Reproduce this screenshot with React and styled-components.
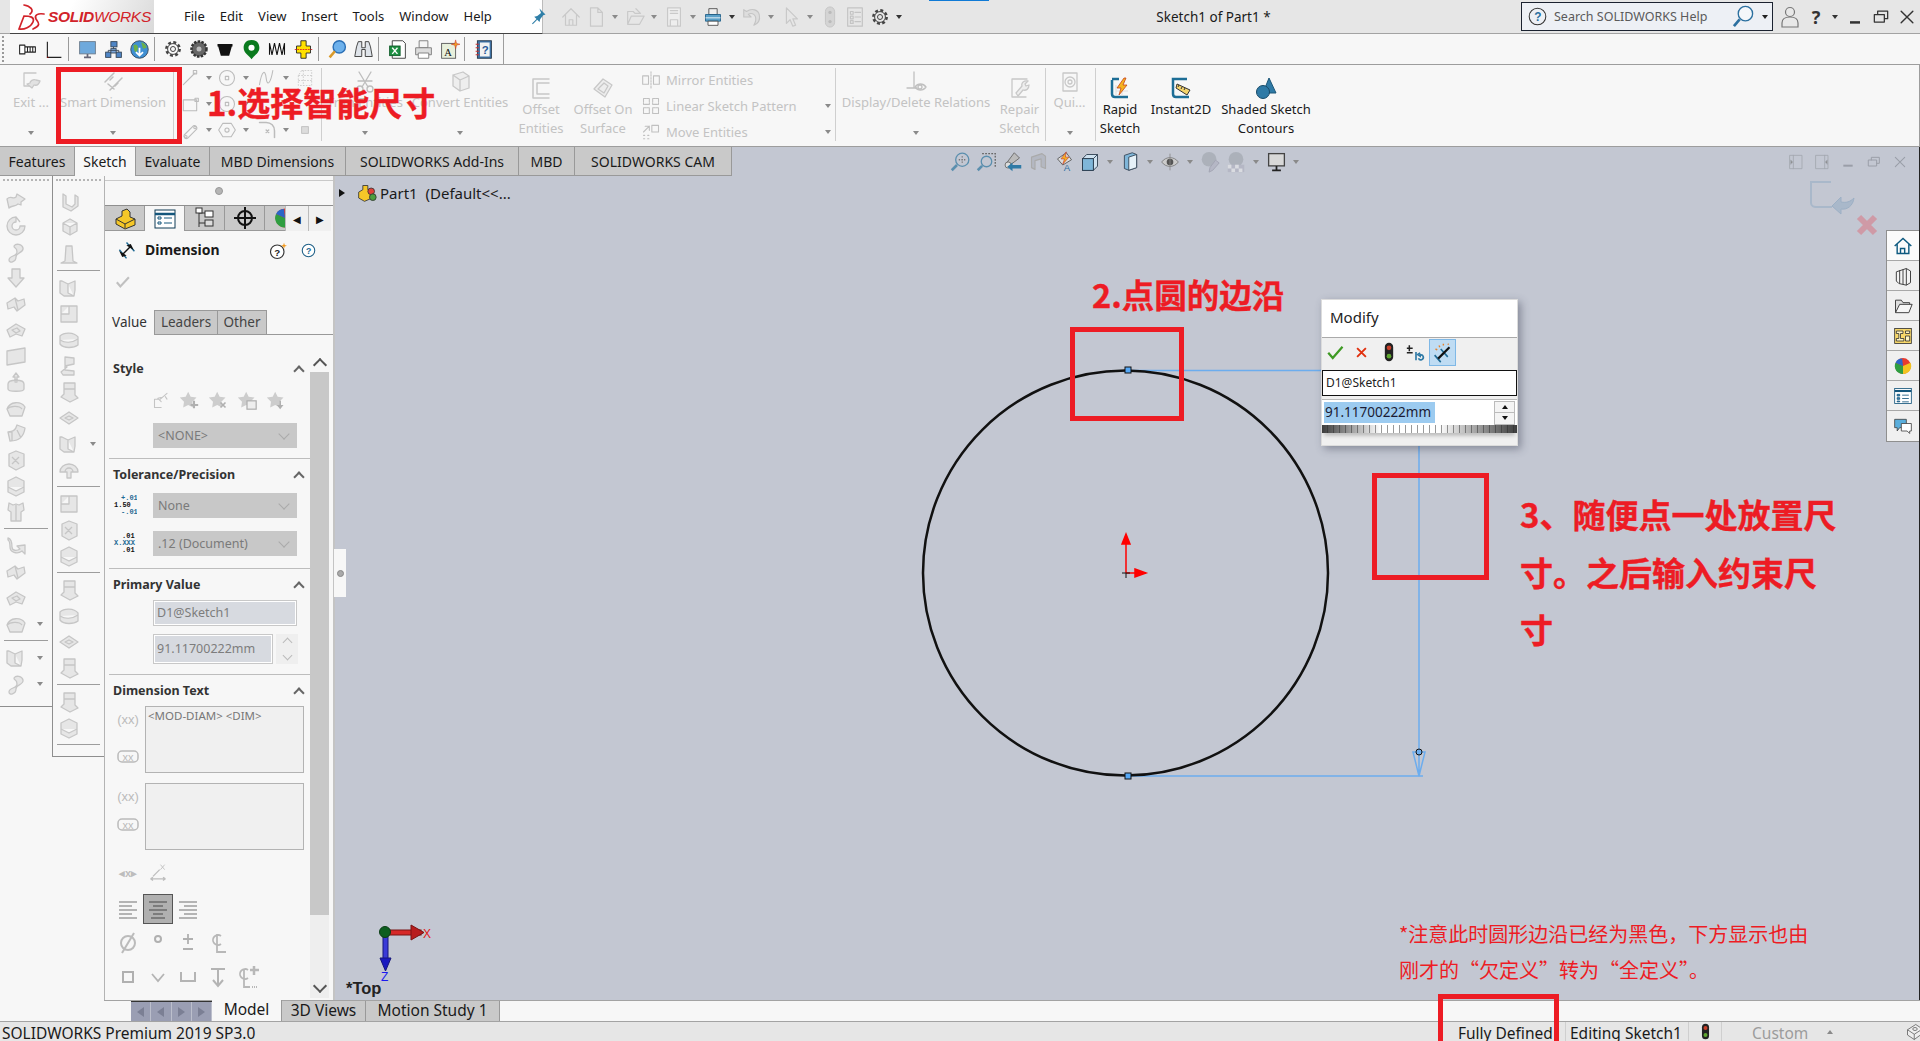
import React from 'react';
import styled, { createGlobalStyle } from 'styled-components';

const UI = `"Noto Sans", "Open Sans", sans-serif`;
const CJK = `"Noto Sans CJK SC", "Noto Sans", sans-serif`;
const RED = '#ed1c24';

const GlobalStyle = createGlobalStyle`
  html, body { margin: 0; padding: 0; width: 1920px; height: 1041px; overflow: hidden; background: #f7f7f7; }
  * { box-sizing: border-box; }
`;

/* ---------- icons ---------- */
const Gh = ({ children, fill = 'none', c = '#bcbcbc', w = 1.3 }) => (
  <g fill={fill} stroke={c} strokeWidth={w} strokeLinejoin="round" strokeLinecap="round">{children}</g>
);
const Solid = ({ d }) => (
  <g fill="#e6e6e6" stroke="#c6c6c6" strokeWidth="1.3" strokeLinejoin="round"><path d={d} /></g>
);

const dockPaths = [
  'M3 11c4-4 6 1 9-2l1-3 8 5-4 3v3l-3-1c-3 3-6 1-9 4z',
  'M12 3a9 9 0 1 0 9 9h-5a4 4 0 1 1-4-4z M12 3l4 5',
  'M5 20c0-5 8-3 8-8s-3-3-3-6c2-3 8-2 9 2 1 5-7 4-7 9s-7 7-7 3z',
  'M8 3h8v9h4l-8 9-8-9h4z',
  'M3 11l8-5 3 3 6-2 1 6-8 6-3-4-6 2z M11 6l3 12',
  'M3 12l9-6 9 5-3 7-6-2-6 3z M8 12l5-2 3 3-4 2z',
  'M3 7l18-3v14l-18 3z',
  'M12 3l3 4h-2v5h-2V7H9z M4 14c0-5 16-5 16 0v5c0 3-16 3-16 0z',
  'M3 13c3-8 14-8 18-2l-3 9H6z M3 13c3-3 12-4 15 0',
  'M4 10c6 0 8-3 9-7l8 3c-1 8-6 13-15 13z M8 10v9 M13 8l4 8',
  'M5 6l7-3 8 3v12l-8 4-7-4z M8 9l7 7 M15 9l-7 7',
  'M4 7l8-4 8 4v6l-8 4-8-4z M4 13v5l8 4 8-4v-5',
  'M5 3l4 2 3-1 3 1 4-2 1 7-3 2v9H7v-9L4 10z M12 5v16',
  'M4 4c4 1 4 6 4 9 0 4 5 4 8 2l-3-3 8-1v9l-3-3c-5 4-12 1-12-4 0-3 0-6-2-7z',
  'M5 5l6 3v9l6 3H7l-4-3V5z M11 8l7-3v9l-1 6',
  'M4 4h16v16H4z M4 12h8V4',
  'M3 8c4-4 14-4 18 1v8c-4 3-14 4-18-1z M3 12c5 3 12 3 18-1',
  'M8 3l9 1v6l-9 2v4l9 1v4H6l-2-3 6-5-2-2z',
  'M7 3h11v12l3 3-8 4-9-5 3-3z M7 9h11',
  'M3 12l9-6 9 6-9 6z M8 12l4-2 4 2-4 2z',
  'M12 3C7 5 6 9 6 13l6 5 6-5 0-9z M6 13l6-4 6 4',
  'M3 14a9 8 0 0 1 18 0H14v6h-4v-6z M8 14a4 4 0 0 1 8 0',
  'M6 4l3 2v8l6 3 3-3V5l3 2v9l-7 5-8-4z',
  'M6 7l7-4 7 4v8l-7 4-7-4z M6 7l7 4 7-4M13 11v8',
  'M9 4h6l1 15 4 2H4l4-2z',
];

const shapes = {
  home: <Gh c="#c9c9c9"><path d="M3 12l9-9 9 9M6 10v11h12V10M10 21v-6h4v6" /></Gh>,
  page: <Gh c="#c9c9c9"><path d="M6 2h8l5 5v15H6z M14 2v5h5" /></Gh>,
  open: <Gh c="#c9c9c9"><path d="M4 20V6h6l2 2h5M4 20l4-9h14l-5 9z M13 3l5 5" /></Gh>,
  save: <Gh c="#c9c9c9" fill="#eee"><path d="M5 2h14v20H5z M8 5h8M8 8h8M8 15h8v7H8z" /></Gh>,
  print: <g><path d="M7 2h10v7H7z" fill="#eee" stroke="#444" /><path d="M3 9h18v8H3z" fill="#5aa0c8" stroke="#1c5c86" /><path d="M3 13h18" stroke="#fff" /><path d="M6 17h12v5H6z" fill="#fff" stroke="#444" /></g>,
  undo: <Gh c="#c4c4c4" fill="#ddd" w={1.2}><path d="M3 4v8h8L8 9c4-2 9 0 8 7-.3 2-1 3-2 5 5-2 7-6 6-11-1-6-8-8-14-4z" /></Gh>,
  cursor: <Gh c="#c9c9c9"><path d="M7 2v17l4-4 3 7 3-1-3-7h5z" /></Gh>,
  rebuild: <g><rect x="7" y="1" width="10" height="22" rx="5" fill="#d4d4d4" stroke="#c4c4c4" /><circle cx="12" cy="7" r="1.8" fill="#bbb" /><circle cx="12" cy="17" r="1.8" fill="#bbb" /></g>,
  props: <Gh c="#c4c4c4"><path d="M4 2h16v20H4z M7 6h3v3H7z M12 7h6 M7 11h3v3H7z M12 12h6 M7 16h3v3H7z M12 17h6" /></Gh>,
  gear: <g fill="none" stroke="#444" strokeWidth="1.2"><circle cx="12" cy="12" r="8" strokeDasharray="3.5 2.8" strokeWidth="3" /><circle cx="12" cy="12" r="6.500" /><circle cx="12" cy="12" r="3" /></g>,
  gearDark: <g><circle cx="12" cy="12" r="9" fill="#666" stroke="#333" strokeDasharray="3 1.500" strokeWidth="3" /><circle cx="12" cy="12" r="3" fill="#bbb" /></g>,
  bolt: <Gh c="#222" fill="#fff" w={1.2}><path d="M3 7h6v10H3z M9 9h12v6H9z M12 9v6 M15 9v6 M18 9v6" /></Gh>,
  axis: <g fill="none" stroke="#222" strokeWidth="1.3"><path d="M5 3v18h16" /><path d="M5 21h1" stroke="#c00" /></g>,
  monitor: <g><rect x="3" y="3" width="18" height="14" fill="#6ea9dc" stroke="#6a7a8a" /><path d="M8 21h8M12 17v4" stroke="#667" strokeWidth="2" /></g>,
  network: <g stroke="#345" fill="#4f86c6"><rect x="9" y="3" width="7" height="6" /><rect x="3" y="15" width="6" height="6" /><rect x="15" y="15" width="6" height="6" /><rect x="9" y="11" width="6" height="5" fill="#7da7d9" /><path d="M12 9v2M6 15v-2h12v2" fill="none" /></g>,
  globe: <g><circle cx="12" cy="12" r="10" fill="#3f8fd2" stroke="#345" /><path d="M5 7c4-2 6 1 5 5s-3 3-4 1z M14 4c3 0 6 3 6 6l-4 1z" fill="#6bb04a" /><path d="M12 10v9M8 15l4 4 4-4" stroke="#fff" strokeWidth="2" fill="none" /></g>,
  belt: <path d="M3 6h18l-4 14H7z M3 6h18v3H3z" fill="#111" />,
  pin: <g><path d="M12 1c-6 0-9 4-9 9 0 6 6 9 9 13 3-4 9-7 9-13 0-5-3-9-9-9z" fill="#0a7a1e" /><circle cx="12" cy="10" r="3.500" fill="#fff" /></g>,
  spring: <g stroke="#111" strokeWidth="1.3" fill="none"><path d="M3 5v14M3 5l3 14 3-14 3 14 3-14 3 14 3-14v14" /></g>,
  cross: <g><path d="M9 2h6v6h5v8h-5v6H9v-6H4V8h5z" fill="#ffe100" stroke="#222" /><path d="M2 12h20" stroke="#d22" strokeDasharray="2 1" /></g>,
  lens: <g><circle cx="14" cy="9" r="7" fill="#6db1ec" stroke="#2a6fb5" strokeWidth="1.600" /><path d="M9 14l-6 7" stroke="#d99a2b" strokeWidth="3" /></g>,
  binoc: <g fill="#dfe4ea" stroke="#333"><path d="M4 9l2-6h4v7h4V3h4l2 6 2 11h-8v-8h-4v8H2z" /></g>,
  excel: <g><path d="M6 2h12l3 3v17H6z" fill="#fff" stroke="#333" /><rect x="3" y="8" width="12" height="11" fill="#1d8f42" stroke="#0e5a28" /><path d="M6 10l6 7M12 10l-6 7" stroke="#fff" strokeWidth="1.500" /></g>,
  printer: <g fill="#ddd" stroke="#777"><path d="M7 2h10v8H7z" fill="#f4f4f4" /><path d="M3 10h18v8H3z" /><path d="M6 16h12v6H6z" fill="#fff" /></g>,
  docStar: <g><rect x="3" y="5" width="16" height="17" fill="#e8f0dc" stroke="#555" /><text x="6" y="19" fontSize="12" fontFamily="Liberation Serif, serif" fill="#111">A</text><path d="M19 1l1 4 4 1-4 1-1 4-1-4-4-1 4-1z" fill="#f0a020" stroke="#c33" strokeWidth=".6" /></g>,
  helpBook: <g><rect x="5" y="2" width="16" height="20" fill="#3f74a8" stroke="#234" /><rect x="8" y="4" width="11" height="16" fill="#f2f2f2" /><text x="10" y="17" fontSize="13" fontWeight="700" fontFamily="Liberation Sans, sans-serif" fill="#2b5b99">?</text><path d="M3 6h4M3 10h4M3 14h4M3 18h4" stroke="#c33" strokeWidth="1.300" /></g>,
  pinTack: <g fill="#2f7fa8"><path d="M14 2l8 8-3 1-4 5-1 4-3-3-6 6-1-1 6-6-3-3 4-1 5-4z" /></g>,
  exit: <Gh c="#c8c8c8"><path d="M17 4H5v13h6" /><path d="M13 19l-5-4 3-1c0-2 3-4 6-3l4 1c-1 3-3 5-6 4z" fill="#e2e2e2" /></Gh>,
  smart: <Gh c="#bfbfbf" w={1.500}><path d="M4 13l9-9M9 21L21 9M7 15l6 5M9 11l3-3M14 17l3-3" /></Gh>,
  line: <Gh><path d="M4 20L18 6" /><rect x="16" y="3" width="4" height="4" /></Gh>,
  circleS: <Gh><circle cx="12" cy="12" r="9" /><rect x="10" y="10" width="4" height="4" /></Gh>,
  spline: <Gh><path d="M3 20C6 2 10 2 11 12s5 8 8-9" /></Gh>,
  dashBox: <g fill="none" stroke="#c8c8c8" strokeDasharray="2 1.500"><path d="M8 3h12v18H4V9z M4 9h16M4 15h16M10 3v18" /></g>,
  rectS: <Gh><path d="M4 7h16v13H4z" /><rect x="18" y="5" width="4" height="4" /></Gh>,
  slotS: <Gh><path d="M5 18l11-11a3 3 0 0 1 4 4L9 22a3 3 0 0 1-4-4z" /><circle cx="18" cy="9" r="1.500" /><circle cx="7" cy="20" r="1.500" /></Gh>,
  polyS: <Gh><path d="M7 4h10l5 8-5 8H7l-5-8z" /><circle cx="12" cy="12" r="2.500" /></Gh>,
  fillet: <Gh w={1.800}><path d="M3 3h8c6 0 10 4 10 10v8" /><path d="M11 12l3 3M14 12l-3 3" /></Gh>,
  pointS: <rect x="8" y="8" width="8" height="8" fill="#dcdcdc" stroke="#bbb" />,
  trim: <Gh c="#bdbdbd"><circle cx="7" cy="20" r="3" /><circle cx="17" cy="20" r="3" /><path d="M9 18L18 3M15 18L6 3M5 12h14" /></Gh>,
  convert: <Gh c="#c8c8c8" fill="#eee"><path d="M5 6l10-3 6 4v12l-9 3-7-5z M5 6l7 5v11M12 11l9-4" /></Gh>,
  offset: <Gh c="#c8c8c8" w={1.500}><path d="M20 3H4v19h16M20 7H8v11h12" /></Gh>,
  offsetS: <Gh c="#c8c8c8" fill="#ededed"><path d="M3 13l9-10 9 6-7 12z M7 13l6-6 4 3-4 7z" /></Gh>,
  mirror: <Gh c="#c0c0c0"><path d="M12 2v20" strokeDasharray="2 1.500" /><path d="M2 7h7v10H2zM15 7h7v10h-7z" /></Gh>,
  pattern: <Gh c="#c0c0c0"><path d="M3 3h7v7H3zM14 3h7v7h-7zM3 14h7v7H3zM14 14h7v7h-7z" strokeDasharray="3 1" /></Gh>,
  move: <Gh c="#c0c0c0"><path d="M3 12L10 5M5 5h5v5M13 4h8v8h-8z" /><path d="M3 16h3M8 16h3M3 20h3M8 20h3" strokeDasharray="1.500 1.500" /></Gh>,
  relations: <Gh c="#c0c0c0"><path d="M10 3v16M3 19h10" /><path d="M11 18c3-4 8-4 11 0-3 4-8 4-11 0z" /><circle cx="16" cy="18" r="2" /></Gh>,
  repair: <Gh c="#c8c8c8"><path d="M19 3H4v18h14" /><path d="M8 17l6-7c-1-3 2-6 6-5l-3 3 1 2 3-1c0 4-3 6-6 5l-5 6z" fill="#eee" /></Gh>,
  quick: <Gh c="#c8c8c8"><path d="M5 4h14M5 4v18h14V4" /><circle cx="12" cy="13" r="5" /><circle cx="12" cy="13" r="2" /></Gh>,
  rapid: <g><path d="M20 21H7c-2 0-3-1-3-3V4" fill="none" stroke="#1d6e96" strokeWidth="2.500" /><path d="M4 3h7" stroke="#1d6e96" strokeWidth="2.500" /><path d="M8 15h12M8 9v11M14 9v11" stroke="#ddd" /><path d="M16 2L9 12h4l-2 7 8-10h-4l3-7z" fill="#f6b421" stroke="#c7411b" strokeWidth=".8" /></g>,
  instant: <g><path d="M20 21H7c-2 0-3-1-3-3V3h14" fill="none" stroke="#1d6e96" strokeWidth="2.500" /><path d="M8 8l13 6-3 5L7 12z" fill="#f4d36a" stroke="#333" /><path d="M10 9l-1 2M13 11l-1 2M16 12l-1 2" stroke="#333" /></g>,
  shaded: <g><path d="M15 2l7 15H9z" fill="#2f7aa6" stroke="#1c5677" /><circle cx="9" cy="16" r="6.500" fill="#2f7aa6" stroke="#174a68" /></g>,
  zoomFit: <g fill="none" stroke="#5b8fae" strokeWidth="1.500"><circle cx="14" cy="10" r="7.500" /><path d="M8 16l-6 6" strokeWidth="3" /><path d="M14 6v8M10 10h8" stroke="#777" strokeDasharray="1.500 1.500" /></g>,
  zoomArea: <g fill="none" stroke="#5b8fae" strokeWidth="1.500"><circle cx="12" cy="12" r="6" /><path d="M7 17l-5 5" strokeWidth="3" /><path d="M7 3h15v15" stroke="#666" strokeDasharray="2 1.500" /></g>,
  prevView: <g><path d="M5 14l9-12 6 6-12 9z" fill="#bbb" stroke="#666" /><circle cx="7" cy="16" r="3.500" fill="#ddd" stroke="#666" /><path d="M22 16H12v-3l-6 5 6 5v-3h10z" fill="#2f7aa6" /></g>,
  sectionV: <Gh c="#aaa" fill="#b4b8c2"><path d="M4 7l12-4 4 3v14l-5-2V9L8 11v10l-4-2z" /></Gh>,
  rapidA: <g><path d="M4 9l10-7 6 8-10 6z" fill="#ddd" stroke="#555" /><path d="M14 1l-6 8h4l-2 6 7-8h-4z" fill="#f6b421" stroke="#b33" strokeWidth=".7" /><text x="11" y="23" fontSize="11" fontFamily="Liberation Sans, sans-serif" fill="#2f6f9f">A</text></g>,
  cube: <g fill="#cfe2f0" stroke="#234"><path d="M3 8l5-5h13v14l-5 5H3z" /><path d="M3 8h13v14M16 8l5-5" fill="none" /><rect x="3" y="8" width="13" height="14" fill="#7fb6d9" /></g>,
  display: <g><path d="M5 5l9-3 5 2v15l-9 3-5-2z" fill="#7fb6d9" stroke="#345" /><path d="M10 7l9-3v15l-9 3z" fill="#e6f1f8" stroke="#345" /></g>,
  eye: <g><path d="M2 12c5-7 15-7 20 0-5 7-15 7-20 0z" fill="#ccc" stroke="#777" /><circle cx="12" cy="12" r="4" fill="#555" /><path d="M12 2v20" stroke="#888" /></g>,
  appear: <g opacity=".55"><circle cx="11" cy="9" r="8" fill="#9aa0a8" /><path d="M12 18l6-8 4 3-7 8-4 2z" fill="#aab" stroke="#889" /></g>,
  scene: <g opacity=".55"><circle cx="12" cy="9" r="8" fill="#9aa0a8" /><path d="M3 15h18v8H3z" fill="#aab" /><path d="M3 15h4v4H3zM11 15h4v4h-4zM7 19h4v4H7zM15 19h4v4h-4z" fill="#eee" /></g>,
  screen: <g><rect x="3" y="3" width="18" height="14" fill="#d8d8d8" stroke="#444" strokeWidth="1.500" /><path d="M12 17v4M7 22h10" stroke="#222" strokeWidth="2" /></g>,
  paneL: <Gh c="#a4a8b0"><path d="M3 2h18v20H3z M8 2v20" /><path d="M7 12l-3-3v6z" fill="#888" /></Gh>,
  paneR: <Gh c="#a4a8b0"><path d="M3 2h18v20H3z M16 2v20" /><path d="M17 12l3-3v6z" fill="#888" /></Gh>,
  winMinDoc: <path d="M5 16h14v3H5z" fill="#9a9ea8" />,
  winMaxDoc: <Gh c="#9a9ea8" w={1.500}><path d="M4 9h12v9H4z M8 9V5h12v9h-4" /></Gh>,
  winCloseDoc: <Gh c="#9a9ea8" w={1.600}><path d="M5 5l14 14M19 5L5 19" /></Gh>,
  winMin: <path d="M3 17h12v3H3z" fill="#333" transform="translate(3 0)" />,
  winMax: <Gh c="#333" w={1.500}><path d="M4 9h12v9H4z M8 9V5h12v9h-4" /></Gh>,
  winClose: <Gh c="#333" w={1.700}><path d="M5 5l14 14M19 5L5 19" /></Gh>,
  taskHome: <g fill="none" stroke="#0e5a80" strokeWidth="1.700"><path d="M2 12l10-9 10 9M5 10v11h14V10M9 21v-6h5v6" /></g>,
  taskBooks: <g fill="#f4f4f4" stroke="#444" strokeWidth="1.200"><path d="M4 7l12-4 5 3v14l-5 3-9-2-3-3z M8 5v16M12 4v18M16 3v20" /></g>,
  taskFolder: <g stroke="#444" strokeWidth="1.200"><path d="M3 20V5h7l2 3h8v3" fill="#ddd" /><path d="M3 20l5-10h15l-4 10z" fill="#f6f6f6" /></g>,
  taskLayout: <g stroke="#333"><rect x="2" y="3" width="20" height="18" fill="#f8d86a" /><path d="M4 6h8v3h-3v6h4v3H4v-3h3V9H4z M15 6h5v3h-5z M15 12h5v6h-5z" fill="#fff4c0" /></g>,
  taskBall: <g><circle cx="12" cy="12" r="9.500" fill="#e63b2e" /><path d="M12 12L3 8a9.500 9.500 0 0 0 9 13.500z" fill="#2f9e41" /><path d="M12 12v9.500A9.500 9.500 0 0 0 21 8z" fill="#f2c320" /><path d="M12 12L3 8a9 9 0 0 1 8-5z" fill="#2a66c8" /></g>,
  taskList: <g stroke="#14567c" fill="#fff"><rect x="2" y="3" width="20" height="18" /><path d="M2 6h20" strokeWidth="2.500" /><path d="M5 10h3v2H5zM5 14h3v2H5zM5 18h3v1H5zM11 11h8M11 15h8M11 19h8" fill="#3a8cc0" /></g>,
  taskChat: <g stroke="#444"><path d="M2 4h14v10H8l-3 4v-4H2z" fill="#5aaedc" /><path d="M10 9h12v9h-2v3l-3-3h-7z" fill="#fff" /></g>,
  partYellow: <g stroke="#333"><path d="M3 13l6-3V5l5-2 3 3v5l5 2v6l-10 4-9-5z" fill="#f5c728" /><path d="M3 13l9 5 10-5M12 18v4" fill="none" /></g>,
  list: <g stroke="#0e3a55" fill="#fff"><rect x="2" y="3" width="20" height="18" /><path d="M2 7h20" strokeWidth="2.500" stroke="#14567c" /><path d="M5 10h3v2H5zM5 15h3v2H5zM11 11h8M11 16h8" stroke="#14567c" /></g>,
  tree: <g stroke="#333" fill="#fff"><path d="M6 3v18M6 7h6M6 17h6" /><rect x="3" y="2" width="6" height="5" /><rect x="12" y="5" width="8" height="6" /><rect x="12" y="14" width="8" height="6" fill="#ddd" /></g>,
  target: <g fill="none" stroke="#111" strokeWidth="2"><circle cx="12" cy="12" r="7" /><path d="M12 1v22M1 12h22" /></g>,
  dimTitle: <g fill="none" stroke="#1e6a94" strokeWidth="1.800"><path d="M3 11l9 11M12 2l10 11" /><path d="M7 17L17 7" stroke="#111" strokeWidth="1.800" /><path d="M5 15l5 3-3 1zM19 9l-5-3 3-1z" fill="#111" stroke="#111" /></g>,
  whatsNew: <g><circle cx="11" cy="13" r="9" fill="#fff" stroke="#333" strokeWidth="1.500" /><text x="7" y="18" fontSize="13" fontWeight="700" fontFamily="Liberation Sans, sans-serif" fill="#222">?</text><path d="M20 1l1 3 3 1-3 1-1 3-1-3-3-1 3-1z" fill="#f39a1e" /></g>,
  helpC: <g><circle cx="12" cy="12" r="10" fill="#fff" stroke="#1e5f86" strokeWidth="1.700" /><text x="8" y="17" fontSize="14" fontWeight="700" fontFamily="Liberation Sans, sans-serif" fill="#1e6a94">?</text></g>,
  helpGrey: <g><circle cx="12" cy="12" r="10.500" fill="none" stroke="#333" strokeWidth="1.300" /><text x="8" y="17.500" fontSize="15" fontWeight="700" fontFamily="Liberation Sans, sans-serif" fill="#2a6f9f">?</text></g>,
  check: <path d="M4 13l5 6L21 6" fill="none" stroke="#c0c0c0" strokeWidth="3" />,
  styleA: <Gh c="#c4c4c4"><path d="M3 11V21h8M3 11h5l3 3M10 11l8-7M7 10l4-1M16 8l2 3" /></Gh>,
  starPlus: <g><path d="M11 2l3 6 7 1-5 5 1 7-6-3-6 3 1-7-5-5 7-1z" fill="#cdcdcd" /><path d="M18 13v9M14 18h9" stroke="#b0b0b0" strokeWidth="2.500" /></g>,
  starX: <g><path d="M11 2l3 6 7 1-5 5 1 7-6-3-6 3 1-7-5-5 7-1z" fill="#cdcdcd" /><path d="M15 15l6 6M21 15l-6 6" stroke="#b0b0b0" strokeWidth="2" /></g>,
  starSave: <g><path d="M11 2l3 6 7 1-5 5 1 7-6-3-6 3 1-7-5-5 7-1z" fill="#cdcdcd" /><rect x="12" y="13" width="11" height="10" fill="#eee" stroke="#b0b0b0" strokeWidth="1.500" /></g>,
  starDown: <g><path d="M11 2l3 6 7 1-5 5 1 7-6-3-6 3 1-7-5-5 7-1z" fill="#cdcdcd" /><path d="M18 13v5h3l-4 5-4-5h3v-5z" fill="#b0b0b0" /></g>,
  tol: <g fontFamily="Liberation Mono, monospace" fontSize="7" fontWeight="700"><text x="8" y="6" fill="#1e6a94">+.01</text><text x="1" y="13" fill="#111">1.50</text><text x="8" y="20" fill="#1e6a94">-.01</text></g>,
  prec: <g fontFamily="Liberation Mono, monospace" fontSize="7" fontWeight="700"><text x="9" y="6" fill="#111">.01</text><text x="1" y="13" fill="#1e6a94">X.XXX</text><text x="9" y="20" fill="#111">.01</text></g>,
  xxParen: <text x="12" y="16" textAnchor="middle" fontSize="13" fontFamily="Liberation Sans, sans-serif" fill="#bbb">(xx)</text>,
  xxBox: <g><rect x="2" y="6" width="20" height="11" rx="4" fill="none" stroke="#bbb" strokeWidth="1.500" /><text x="12" y="15.500" textAnchor="middle" fontSize="11" fontFamily="Liberation Sans, sans-serif" fill="#bbb">xx</text></g>,
  arrowX: <text x="12" y="16" textAnchor="middle" fontSize="11" fontFamily="Liberation Sans, sans-serif" fontWeight="700" fill="#bdbdbd">◂x▸</text>,
  arrowAngle: <g stroke="#bdbdbd" fill="none" strokeWidth="1.500"><path d="M3 19h18M3 19l3-2M3 19l3 2M21 19l-3-2M21 19l-3 2M6 16l8-8" /><path d="M15 2l5 6M20 2l-5 6" strokeWidth="1" /></g>,
  alignL: <path d="M3 5h18M3 9h13M3 13h18M3 17h13M3 21h18" stroke="#b4b4b4" strokeWidth="1.800" />,
  alignC: <path d="M3 5h18M7 9h10M3 13h18M7 17h10M5 21h14" stroke="#7c7c7c" strokeWidth="1.800" />,
  alignR: <path d="M3 5h18M8 9h13M3 13h18M8 17h13M3 21h18" stroke="#b4b4b4" strokeWidth="1.800" />,
  diam: <g fill="none" stroke="#bbb" strokeWidth="2"><circle cx="12" cy="13" r="7" /><path d="M6 23L18 3" /></g>,
  deg: <circle cx="12" cy="9" r="3" fill="none" stroke="#b0b0b0" strokeWidth="2" />,
  plusMinus: <path d="M12 4v10M7 9h10M7 19h10" stroke="#b0b0b0" strokeWidth="1.800" fill="none" />,
  cl: <g fill="none" stroke="#b8b8b8" strokeWidth="1.800"><path d="M15 6a5 5 0 1 0 0 8M11 4v18h9" /></g>,
  sq: <rect x="7" y="7" width="10" height="10" fill="none" stroke="#b0b0b0" strokeWidth="2" />,
  vee: <path d="M6 9l6 7 6-7" fill="none" stroke="#b4b4b4" strokeWidth="1.800" />,
  cbore: <path d="M5 7v9h14V7" fill="none" stroke="#b4b4b4" strokeWidth="2" />,
  depth: <path d="M5 4h14M12 4v17M7 15l5 6 5-6" fill="none" stroke="#b4b4b4" strokeWidth="2" />,
  clPlus: <g fill="none" stroke="#b8b8b8" strokeWidth="1.800"><path d="M12 5a5 5 0 1 0 0 8M8 4v18h6" /><path d="M18 1v9M14 5h9" strokeWidth="2.500" /><path d="M16 22h6" strokeDasharray="1 1" /></g>,
  check2: <path d="M3 13l6 7L22 5" fill="none" stroke="#3f9a24" strokeWidth="3" />,
  cross2: <path d="M5 5l14 14M19 5L5 19" stroke="#e1300e" strokeWidth="3" />,
  traffic: <g><rect x="7" y="1" width="10" height="22" rx="5" fill="#222" /><circle cx="12" cy="7" r="2.800" fill="#c8402a" /><circle cx="12" cy="17" r="2.800" fill="#5ea72f" /></g>,
  linkUndo: <g><path d="M4 4v7M1 7.500h7M1 13h7" stroke="#222" strokeWidth="1.800" /><path d="M12 12v10" stroke="#2f7aa6" strokeWidth="2" /><path d="M17 13l-3 2 3 2v-1.500a3 3 0 1 1-2 4" fill="none" stroke="#2f7aa6" strokeWidth="2" /></g>,
  wand: <g><path d="M3 15l7 8M10 8l8 9" stroke="#1e6a94" strokeWidth="1.800" fill="none" /><path d="M7 19L20 6" stroke="#111" strokeWidth="2.500" /><path d="M8 4l1 2M13 2v2M18 2l1 1M4 8l2 1" stroke="#e8812a" strokeWidth="1.600" /></g>,
  user: <g fill="#e8e8e8" stroke="#777" strokeWidth="1.200"><circle cx="12" cy="7" r="4.500" /><path d="M4 22v-4c0-4 3-6 8-6s8 2 8 6v4z" /></g>,
  searchLens: <g fill="none" stroke="#2a6f9f" strokeWidth="1.400"><circle cx="14" cy="9" r="7.500" fill="#f4f7fa" /><path d="M8 15l-6 7" strokeWidth="2.800" /></g>,
  partTree: <g stroke="#333"><path d="M2 11l5-3V3h6v5l3 2v9l-7 3-7-4z" fill="#f5c728" /><circle cx="17" cy="10" r="4" fill="#e0413a" /><circle cx="19" cy="17" r="4" fill="#4a9e3f" /></g>,
  diskMini: <g fill="#eee" stroke="#555"><path d="M2 9l11-7 9 6v6l-11 8-9-6z" /><path d="M2 9l9 6 11-7M11 15v7" fill="none" /><ellipse cx="12" cy="8" rx="3" ry="2" fill="none" /></g>,
};

const Ico = ({ n, s = 24 }) => (
  <svg width={s} height={s} viewBox="0 0 24 24" style={{ display: 'block', flex: 'none' }}>{shapes[n]}</svg>
);
const Ghost = ({ i, s = 24 }) => (
  <svg width={s} height={s} viewBox="0 0 24 24" style={{ display: 'block', flex: 'none' }}><Solid d={dockPaths[i % dockPaths.length]} /></svg>
);

/* ---------- shell ---------- */
const Window = styled.div`
  position: relative;
  width: 1920px;
  height: 1041px;
  overflow: hidden;
  display: flex;
  flex-direction: column;
  background: #f7f7f7;
  font-family: ${UI};
  color: #1a1a1a;
`;

const TitleBar = styled.div`
  position: relative;
  height: 34px;
  display: flex;
  flex: none;
  padding-left: 10px;
  background: #e6e6e6;
  border-bottom: 1px solid #a3a3a3;
`;
const TopAccent = styled.div`
  position: absolute;
  left: 929px;
  top: 0;
  width: 60px;
  height: 1px;
  background: #0f7ad6;
`;
const LogoBox = styled.div`
  width: 144px;
  height: 34px;
  flex: none;
  display: flex;
  align-items: center;
  padding-left: 5px;
  background: linear-gradient(115deg, #ffffff 40%, #d9d9d9);
  border-bottom: 1px solid #444;
`;
const LogoText = styled.span`
  font: italic 700 15.500px "Liberation Sans", sans-serif;
  color: #d2232a;
  letter-spacing: -0.3px;
  margin-left: 3px;
  white-space: nowrap;
  span { font-weight: 400; }
`;
const MenuBox = styled.div`
  width: 389px;
  height: 34px;
  flex: none;
  display: flex;
  align-items: center;
  gap: 15px;
  padding: 0 0 1px 30px;
  background: #fff;
  border-bottom: 1px solid #444;
  border-right: 1px solid #bbb;
  font-size: 13px;
`;
const PinSlot = styled.div`
  margin-left: 22px;
`;
const QuickBar = styled.div`
  display: flex;
  flex: none;
  align-items: center;
  padding-left: 15px;
  width: 364px;
`;
const Slot = styled.div`
  width: ${(p) => p.$w || 25}px;
  height: ${(p) => p.$h || 24}px;
  flex: none;
  display: flex;
  align-items: center;
  justify-content: center;
`;
const Caret = styled.i`
  display: block;
  flex: none;
  width: 0;
  height: 0;
  border-left: 3.500px solid transparent;
  border-right: 3.500px solid transparent;
  border-top: 4px solid ${(p) => p.$c || '#8a8a8a'};
  ${(p) => p.$up && `border-top: 0; border-bottom: 4px solid ${p.$c || '#8a8a8a'};`}
`;
const DocTitle = styled.div`
  width: 612px;
  flex: none;
  text-align: center;
  font-size: 13.500px;
  line-height: 34px;
  padding-left: 1px;
`;
const SearchBox = styled.div`
  margin: 2px 0 0 2px;
  width: 252px;
  height: 29px;
  flex: none;
  display: flex;
  align-items: center;
  padding: 0 0 0 6px;
  background: #edf0f5;
  border: 1.500px solid #1b2230;
  font-size: 12.500px;
  color: #5a5a5a;
`;
const SearchText = styled.span`
  margin-left: 7px;
  width: 172px;
  flex: none;
  white-space: nowrap;
`;
const WinButtons = styled.div`
  display: flex;
  align-items: center;
  margin-left: 4px;
`;

const ToolRow = styled.div`
  height: 31px;
  flex: none;
  background: #f7f7f7;
  border-bottom: 1px solid #9d9d9d;
`;
const ToolInner = styled.div`
  width: 504px;
  height: 100%;
  display: flex;
  align-items: center;
  border-right: 1px solid #9d9d9d;
`;
const Grip = styled.div`
  width: 2px;
  height: 26px;
  margin: 0 10px 0 2px;
  border-left: 2px dotted #999;
`;
const ToolSep = styled.div`
  width: 1px;
  height: 24px;
  background: #9a9a9a;
  margin: 0 5px 0 2px;
`;

/* ---------- ribbon ---------- */
const Ribbon = styled.div`
  height: 82px;
  flex: none;
  display: flex;
  background: #f7f7f7;
  border-bottom: 1px solid #9d9d9d;
  border-right: 1px solid #9d9d9d;
`;
const RibbonButton = styled.div`
  width: ${(p) => p.$w}px;
  height: 81px;
  flex: none;
  display: flex;
  flex-direction: column;
  align-items: center;
  padding-top: ${(p) => (p.$two ? 11 : 4)}px;
`;
const RibbonLabel = styled.div`
  font-size: 13px;
  line-height: 19px;
  text-align: center;
  white-space: nowrap;
  color: ${(p) => (p.$on ? '#1a1a1a' : '#c3c3c3')};
`;
const RibbonCaret = styled.div`
  margin-top: auto;
  margin-bottom: 11px;
`;
const RibbonGap = styled.div`
  width: ${(p) => p.$w}px;
  flex: none;
`;
const RibbonSep = styled.div`
  width: 1px;
  height: 73px;
  margin-top: 3px;
  flex: none;
  background: #cfcfcf;
`;
const SketchGrid = styled.div`
  width: 147px;
  flex: none;
  padding-left: 6px;
  display: grid;
  grid-template-columns: 37px 40px 38px 26px;
  grid-auto-rows: 26px;
`;
const SketchCell = styled.div`
  display: flex;
  align-items: center;
  gap: ${(p) => p.$gap || 6}px;
`;
const StackColumn = styled.div`
  width: 199px;
  flex: none;
  display: flex;
  flex-direction: column;
  padding: 2px 4px 0 5px;
`;
const StackRow = styled.div`
  height: 26px;
  display: flex;
  align-items: center;
  gap: 5px;
  font-size: 13px;
  color: #c3c3c3;
  white-space: nowrap;
  ${Caret} { margin-left: auto; }
`;

/* ---------- tabs ---------- */
const TabRow = styled.div`
  height: 29px;
  flex: none;
  display: flex;
  align-items: stretch;
  background: #c3c7d2;
  border-right: 1px solid #222;
`;
const Tab = styled.div`
  width: ${(p) => p.$w}px;
  flex: none;
  display: flex;
  align-items: center;
  justify-content: center;
  font-size: 14px;
  white-space: nowrap;
  background: ${(p) => (p.$on ? '#f7f7f7' : '#c9c9c9')};
  border-right: 1px solid #999;
  border-bottom: ${(p) => (p.$on ? 'none' : '1px solid #999')};
`;
const HeadsUp = styled.div`
  margin-left: 215px;
  display: flex;
  align-items: center;
`;
const DocControls = styled.div`
  margin-left: 480px;
  display: flex;
  align-items: center;
`;

/* ---------- left side ---------- */
const Work = styled.div`
  flex: 1;
  min-height: 0;
  display: flex;
`;
const Dock = styled.div`
  width: 104px;
  flex: none;
  display: flex;
  align-items: flex-start;
  background: #f7f7f7;
`;
const DockColumn = styled.div`
  width: ${(p) => p.$w}px;
  height: ${(p) => p.$h}px;
  flex: none;
  border-bottom: 1px solid #8e8e8e;
  border-left: ${(p) => (p.$line ? '1px solid #8e8e8e' : 'none')};
`;
const DockGrip = styled.div`
  height: ${(p) => p.$h}px;
  margin: 0 3px;
  padding-top: 3px;
  &::before {
    content: '';
    display: block;
    border-top: 2px dotted #b5b5b5;
  }
`;
const DockSlot = styled.div`
  height: 26px;
  display: flex;
  align-items: center;
  padding-left: 4px;
  ${Caret} { margin-left: 9px; }
`;
const DockSep = styled.div`
  height: 1px;
  margin: 3px 4px 4px 4px;
  background: #9d9d9d;
`;

const Center = styled.div`
  flex: 1;
  min-width: 0;
  display: flex;
  flex-direction: column;
`;
const CenterTop = styled.div`
  flex: 1;
  min-height: 0;
  display: flex;
`;

/* ---------- property manager ---------- */
const Pane = styled.div`
  width: 231px;
  flex: none;
  display: flex;
  flex-direction: column;
  background: #f7f7f7;
  border-left: 1px solid #b3b3b3;
  border-right: 2px solid #c4c4c4;
`;
const PaneGrip = styled.div`
  height: 29px;
  flex: none;
  display: flex;
  align-items: center;
  justify-content: center;
  position: relative;
  &::before {
    content: '';
    width: 6px;
    height: 6px;
    border-radius: 50%;
    background: #b5b5b5;
    border: 1px solid #999;
  }
  &::after {
    content: '';
    position: absolute;
    left: 0;
    right: 0;
    top: 4px;
    border-top: 1px solid #c9c9c9;
  }
`;
const PaneTabs = styled.div`
  position: relative;
  height: 26px;
  flex: none;
  display: flex;
  overflow: hidden;
  border-top: 1px solid #8f8f8f;
`;
const PaneTab = styled.div`
  width: 40px;
  flex: none;
  display: flex;
  align-items: center;
  justify-content: center;
  background: ${(p) => (p.$on ? '#f7f7f7' : '#c9c9c9')};
  border-right: 1px solid #999;
  border-bottom: ${(p) => (p.$on ? 'none' : '1px solid #999')};
`;
const PaneArrows = styled.div`
  position: absolute;
  right: 2px;
  top: 0;
  height: 25px;
  display: flex;
  background: #f0f0f0;
`;
const PaneArrow = styled.div`
  width: 23px;
  display: flex;
  align-items: center;
  justify-content: center;
  border-left: 1px solid #bbb;
  font-size: 10px;
  color: #111;
`;
const PaneHead = styled.div`
  height: 39px;
  flex: none;
  display: flex;
  align-items: center;
  padding-left: 12px;
`;
const PaneTitle = styled.div`
  margin-left: 9px;
  width: 117px;
  padding-bottom: 2px;
  font-weight: 700;
  font-size: 14px;
`;
const PaneHelp = styled.div`
  width: 31px;
  display: flex;
  justify-content: center;
`;
const CheckRow = styled.div`
  height: 40px;
  flex: none;
  padding: 3px 0 0 9px;
`;
const SubTabs = styled.div`
  height: 25px;
  flex: none;
  display: flex;
  border-bottom: 1px solid #999;
`;
const SubTab = styled.div`
  width: ${(p) => p.$w}px;
  flex: none;
  display: flex;
  align-items: center;
  justify-content: center;
  padding-bottom: 2px;
  font-size: 13.500px;
  background: ${(p) => (p.$on ? '#f7f7f7' : '#c9c9c9')};
  border-top: ${(p) => (p.$on ? 'none' : '1px solid #999')};
  border-right: 1px solid #999;
  color: ${(p) => (p.$on ? '#333' : '#444')};
  height: ${(p) => (p.$on ? 25 : 24)}px;
`;
const PaneBody = styled.div`
  flex: 1;
  min-height: 0;
  display: flex;
`;
const PaneForm = styled.div`
  width: 205px;
  flex: none;
  padding: 24px 0 0 4px;
`;
const Group = styled.div`
  padding-bottom: ${(p) => p.$pb}px;
  border-bottom: ${(p) => (p.$last ? 'none' : '1px solid #bdbdbd')};
  margin-bottom: 6px;
`;
const GroupTitle = styled.div`
  height: 20px;
  display: flex;
  align-items: center;
  justify-content: space-between;
  padding: 0 3px 2px 4px;
  font-size: 12.500px;
  font-weight: 700;
  color: #333;
`;
const Chevron = styled.i`
  width: 8px;
  height: 8px;
  margin: 6px 4px 0 0;
  border-left: 2px solid #666;
  border-top: 2px solid #666;
  transform: rotate(45deg);
`;
const StyleIcons = styled.div`
  height: 24px;
  margin: 9px 0 11px 41px;
  display: flex;
  align-items: center;
`;
const FieldRow = styled.div`
  margin-top: ${(p) => p.$mt}px;
  display: flex;
  align-items: center;
  padding-left: ${(p) => p.$pl || 44}px;
`;
const FieldIcon = styled.div`
  width: 40px;
  margin-left: 3px;
  flex: none;
`;
const Dropdown = styled.div`
  width: 144px;
  height: 25px;
  display: flex;
  align-items: center;
  justify-content: space-between;
  padding: 0 7px 0 5px;
  background: #c8c8c8;
  font-size: 12.500px;
  color: #7a7a7a;
  &::after {
    content: '';
    width: 7px;
    height: 7px;
    margin: -4px 2px 0 0;
    border-right: 1px solid #aaa;
    border-bottom: 1px solid #aaa;
    transform: rotate(45deg);
  }
`;
const ReadOnly = styled.div`
  width: ${(p) => p.$w}px;
  height: ${(p) => p.$h}px;
  display: flex;
  align-items: center;
  padding: 0 0 2px 3px;
  background: #d7dae0;
  border: 1px solid #c8c8c8;
  box-shadow: inset 0 0 0 1px #fff;
  font-size: 12.500px;
  color: #7d7d7d;
`;
const Spin = styled.div`
  width: 22px;
  height: 30px;
  margin-left: 3px;
  background: #efefef;
  display: flex;
  flex-direction: column;
  align-items: center;
  justify-content: center;
  gap: 6px;
  &::before, &::after {
    content: '';
    width: 6px;
    height: 6px;
    border-left: 1.500px solid #bbb;
    border-top: 1.500px solid #bbb;
    transform: rotate(45deg);
  }
  &::after { transform: rotate(225deg); }
`;
const TextRow = styled.div`
  margin-top: ${(p) => p.$mt}px;
  display: flex;
`;
const TextIcons = styled.div`
  width: 33px;
  margin-left: 3px;
  flex: none;
  display: flex;
  flex-direction: column;
  gap: ${(p) => p.$gap}px;
  padding: 2px 0 0 4px;
`;
const TextBox = styled.div`
  width: 159px;
  height: 67px;
  padding: 2px;
  background: #f0f0f0;
  border: 1px solid #b3b3b3;
  font-size: 11.500px;
  line-height: 14px;
  color: #777;
`;
const IconLine = styled.div`
  margin-top: ${(p) => p.$mt}px;
  height: ${(p) => p.$h || 26}px;
  padding-left: 4px;
  display: flex;
  align-items: center;
`;
const IconCell = styled.div`
  width: 30px;
  height: 30px;
  flex: none;
  display: flex;
  align-items: center;
  justify-content: center;
  ${(p) => p.$on && 'background: #b0b0b0; border: 1px solid #555;'}
`;
const Scroll = styled.div`
  width: 19px;
  margin: 17px 0 2px 0;
  flex: none;
  display: flex;
  flex-direction: column;
  background: #eeeeee;
`;
const ScrollEnd = styled.div`
  height: 20px;
  flex: none;
  display: flex;
  align-items: center;
  justify-content: center;
  background: ${(p) => (p.$top ? '#f7f7f7' : 'transparent')};
  &::before {
    content: '';
    width: 8px;
    height: 8px;
    margin-top: ${(p) => (p.$top ? 5 : -5)}px;
    border-left: 2px solid #555;
    border-top: 2px solid #555;
    transform: rotate(${(p) => (p.$top ? 45 : 225)}deg);
  }
`;
const ScrollThumb = styled.div`
  height: 543px;
  flex: none;
  background: #c8c8c8;
`;
const ScrollFill = styled.div`
  flex: 1;
`;

/* ---------- viewport ---------- */
const Viewport = styled.div`
  position: relative;
  flex: 1;
  min-width: 0;
  background: #c3c7d2;
  border-right: 1px solid #222;
`;
const Canvas = styled.svg`
  position: absolute;
  left: 0;
  top: 0;
  display: block;
`;
const SashHandle = styled.div`
  position: absolute;
  left: -1px;
  top: 373px;
  width: 12px;
  height: 48px;
  display: flex;
  align-items: center;
  justify-content: center;
  background: #f7f7f7;
  &::before {
    content: '';
    width: 5px;
    height: 5px;
    border-radius: 50%;
    background: #aaa;
    border: 1px solid #888;
  }
`;
const TreeRow = styled.div`
  position: absolute;
  left: 4px;
  top: 7px;
  display: flex;
  align-items: center;
  font-size: 15px;
  white-space: pre;
`;
const TreeArrow = styled.i`
  width: 0;
  height: 0;
  margin-right: 12px;
  border-top: 4.500px solid transparent;
  border-bottom: 4.500px solid transparent;
  border-left: 6px solid #111;
`;
const TreeLabel = styled.span`
  margin-left: 3px;
`;
const TaskPane = styled.div`
  position: absolute;
  right: 0;
  top: 54px;
  width: 33px;
  border: 1px solid #8f8f8f;
  border-right: none;
  background: #f0f0f0;
`;
const TaskItem = styled.div`
  height: 30px;
  display: flex;
  align-items: center;
  justify-content: center;
  background: ${(p) => (p.$on ? '#fbfbfb' : '#f0f0f0')};
  border-bottom: 1px solid #a8a8a8;
  &:last-child { border-bottom: none; }
`;
const ViewLabel = styled.div`
  position: absolute;
  left: 11px;
  bottom: 2px;
  font: 700 16.500px/20px "Liberation Sans", sans-serif;
  color: #222;
`;

const ModifyBox = styled.div`
  position: absolute;
  left: 986px;
  top: 123px;
  width: 197px;
  height: 147px;
  background: #f0f0f0;
  border: 1px solid #dcdcdc;
  box-shadow: 3px 3px 8px rgba(60, 65, 85, 0.45);
  font-size: 12.500px;
`;
const ModifyTitle = styled.div`
  height: 38px;
  padding: 0 0 4px 8px;
  display: flex;
  align-items: center;
  background: #fff;
  border-bottom: 1px solid #aaa;
  font-size: 15px;
  color: #222;
`;
const ModifyTools = styled.div`
  height: 32px;
  display: flex;
  align-items: center;
  padding-bottom: 4px;
  margin-left: -1px;
`;
const ModifyTool = styled.div`
  width: 27px;
  height: 27px;
  flex: none;
  display: flex;
  align-items: center;
  justify-content: center;
  ${(p) => p.$on && 'background: #bfdcf3; border: 1px solid #7fb8e6;'}
`;
const ModifyName = styled.div`
  height: 26px;
  display: flex;
  align-items: center;
  padding: 0 0 1px 3px;
  background: #fff;
  border: 1px solid #111;
  color: #222;
  font-size: 12px;
`;
const ModifyValue = styled.div`
  height: 26px;
  margin-top: 3px;
  display: flex;
  align-items: center;
  justify-content: space-between;
  padding: 0 2px;
  background: #fff;
  border-top: 1px solid #bbb;
`;
const Selected = styled.span`
  padding: 1px 0 1px 1px;
  width: 111px;
  background: #9ccbf0;
  font-size: 13.500px;
  line-height: 19px;
  color: #1b1b33;
  white-space: nowrap;
`;
const Stepper = styled.div`
  width: 21px;
  display: flex;
  flex-direction: column;
  border: 1px solid #bbb;
`;
const StepBtn = styled.div`
  height: 11px;
  display: flex;
  align-items: center;
  justify-content: center;
  background: #f4f4f4;
  &:first-child { border-bottom: 1px solid #bbb; }
`;
const Thumbwheel = styled.div`
  height: 8px;
  background:
    linear-gradient(90deg, rgba(40,40,40,.9), transparent 30%, transparent 60%, rgba(40,40,40,.9)),
    repeating-linear-gradient(90deg, #fff 0 5px, #999 5px 6px);
  box-shadow: 0 4px 4px -2px rgba(0, 0, 0, 0.3);
`;

/* ---------- bottom ---------- */
const BottomTabs = styled.div`
  height: 21px;
  flex: none;
  display: flex;
  background: #f7f7f7;
  border-top: 1px solid #a3a3a3;
  padding-left: 27px;
  font-size: 15.500px;
`;
const NavGroup = styled.div`
  width: 81px;
  display: flex;
  background: #9a9eb3;
  border-top: 1px solid #333;
`;
const NavBtn = styled.div`
  flex: 1;
  display: flex;
  align-items: center;
  justify-content: center;
  border-right: 1px solid #bcbfcc;
  &::before {
    content: '';
    width: 0;
    height: 0;
    border-top: 5px solid transparent;
    border-bottom: 5px solid transparent;
    ${(p) => (p.$back ? 'border-right: 7px solid #7b7f94;' : 'border-left: 7px solid #7b7f94;')}
  }
`;
const ModelTab = styled.div`
  width: ${(p) => p.$w}px;
  flex: none;
  display: flex;
  align-items: center;
  justify-content: center;
  padding-bottom: 3px;
  white-space: nowrap;
  background: ${(p) => (p.$on ? '#f7f7f7' : '#c9c9c9')};
  border-right: 1px solid #999;
  ${(p) => p.$on && 'margin-top: -1px;'}
`;
const StatusBar = styled.div`
  height: 20px;
  flex: none;
  display: flex;
  overflow: hidden;
  background: #e6e6e6;
  border-top: 1px solid #a3a3a3;
  font-size: 15.500px;
  line-height: 22px;
`;
const StatusText = styled.div`
  width: ${(p) => p.$w}px;
  flex: none;
  padding-left: ${(p) => p.$pl || 0}px;
  white-space: nowrap;
  color: ${(p) => p.$c || '#1a1a1a'};
  ${(p) => p.$sep && 'border-right: 1px solid #cfcfcf;'}
`;
const StatusIcon = styled.div`
  width: ${(p) => p.$w}px;
  flex: none;
  display: flex;
  justify-content: center;
  padding-top: 1px;
  ${(p) => p.$sep && 'border-right: 1px solid #cfcfcf;'}
`;
const StatusCaret = styled.div`
  padding-top: 7px;
`;

/* ---------- annotations ---------- */
const RedBox = styled.div`
  position: absolute;
  left: ${(p) => p.$x}px;
  top: ${(p) => p.$y}px;
  width: ${(p) => p.$w}px;
  height: ${(p) => p.$h}px;
  border: 5px solid ${RED};
  pointer-events: none;
`;
const Note = styled.div`
  position: absolute;
  left: ${(p) => p.$x}px;
  top: ${(p) => p.$y}px;
  width: ${(p) => p.$w}px;
  font-family: ${CJK};
  font-size: ${(p) => p.$size}px;
  font-weight: ${(p) => p.$weight || 700};
  line-height: ${(p) => p.$lh}px;
  color: ${RED};
  ${(p) => !p.$weight && `-webkit-text-stroke: 0.4px ${RED};`}
`;

const col1 = [[0], [1], [2], [3], [4], [5], [6], [7], [8], [9], [10], [11], [12], 'sep', [13], [4], [5], [8, true], 'sep', [14, true], [2, true]];
const col2 = [[22], [23], [24], 'sep', [14], [15], [16], [17], [18], [19], [14, true], [21], 'sep', [15], [10], [11], 'sep', [18], [16], [19], [18], 'sep', [18], [11], 'sep'];

function DockList({ items }) {
  return items.map((it, i) =>
    it === 'sep' ? (
      <DockSep key={i} />
    ) : (
      <DockSlot key={i}>
        <Ghost i={it[0]} />
        {it[1] && <Caret />}
      </DockSlot>
    )
  );
}

export default function App() {
  return (
    <Window>
      <GlobalStyle />
      <TitleBar>
        <TopAccent />
        <LogoBox>
          <svg width="30" height="30" viewBox="0 0 30 30" style={{ flex: 'none' }}>
            <g fill="none" stroke="#d2232a" strokeWidth="1.700" strokeLinecap="round">
              <path d="M9 3c6 1 11 5 6 9" />
              <path d="M4 27l5-13c6 0 11 1 9 6-2 5-9 8-14 7z" />
              <path d="M29 12c-6-1-10 1-8 5 2 3 6 6-3 10" />
            </g>
          </svg>
          <LogoText>SOLID<span>WORKS</span></LogoText>
        </LogoBox>
        <MenuBox>
          <span>File</span><span>Edit</span><span>View</span><span>Insert</span><span>Tools</span><span>Window</span><span>Help</span>
          <PinSlot><Ico n="pinTack" s={18} /></PinSlot>
        </MenuBox>
        <QuickBar>
          <Slot><Ico n="home" s={22} /></Slot>
          <Slot><Ico n="page" s={22} /></Slot>
          <Slot $w={14}><Caret /></Slot>
          <Slot><Ico n="open" s={22} /></Slot>
          <Slot $w={14}><Caret /></Slot>
          <Slot><Ico n="save" s={22} /></Slot>
          <Slot $w={14}><Caret /></Slot>
          <Slot><Ico n="print" s={20} /></Slot>
          <Slot $w={14}><Caret $c="#333" /></Slot>
          <Slot><Ico n="undo" s={22} /></Slot>
          <Slot $w={14}><Caret /></Slot>
          <Slot><Ico n="cursor" s={22} /></Slot>
          <Slot $w={14}><Caret /></Slot>
          <Slot><Ico n="rebuild" s={22} /></Slot>
          <Slot><Ico n="props" s={22} /></Slot>
          <Slot><Ico n="gear" s={20} /></Slot>
          <Slot $w={14}><Caret $c="#333" /></Slot>
        </QuickBar>
        <DocTitle>Sketch1 of Part1 *</DocTitle>
        <SearchBox>
          <Ico n="helpGrey" s={19} />
          <SearchText>Search SOLIDWORKS Help</SearchText>
          <Slot $w={34}><Ico n="searchLens" s={23} /></Slot>
          <Slot $w={10}><Caret $c="#222" /></Slot>
        </SearchBox>
        <WinButtons>
          <Slot $w={26}><Ico n="user" /></Slot>
          <Slot $w={26}><span style={{ fontWeight: 700, fontSize: 18, color: '#333' }}>?</span></Slot>
          <Slot $w={12}><Caret $c="#333" /></Slot>
          <Slot $w={27}><Ico n="winMin" s={20} /></Slot>
          <Slot $w={25}><Ico n="winMax" s={20} /></Slot>
          <Slot $w={27}><Ico n="winClose" s={20} /></Slot>
        </WinButtons>
      </TitleBar>

      <ToolRow>
        <ToolInner>
          <Grip />
          <Slot $w={26}><Ico n="bolt" s={21} /></Slot>
          <Slot $w={26}><Ico n="axis" s={21} /></Slot>
          <ToolSep />
          <Slot $w={26}><Ico n="monitor" s={21} /></Slot>
          <Slot $w={26}><Ico n="network" s={21} /></Slot>
          <Slot $w={26}><Ico n="globe" s={21} /></Slot>
          <ToolSep />
          <Slot $w={26}><Ico n="gear" s={20} /></Slot>
          <Slot $w={26}><Ico n="gearDark" s={20} /></Slot>
          <Slot $w={26}><Ico n="belt" s={20} /></Slot>
          <Slot $w={26}><Ico n="pin" s={21} /></Slot>
          <Slot $w={26}><Ico n="spring" s={20} /></Slot>
          <Slot $w={26}><Ico n="cross" s={21} /></Slot>
          <ToolSep />
          <Slot $w={26}><Ico n="lens" s={21} /></Slot>
          <Slot $w={26}><Ico n="binoc" s={21} /></Slot>
          <ToolSep />
          <Slot $w={26}><Ico n="excel" s={21} /></Slot>
          <Slot $w={26}><Ico n="printer" s={21} /></Slot>
          <Slot $w={26}><Ico n="docStar" s={21} /></Slot>
          <ToolSep />
          <Slot $w={26}><Ico n="helpBook" s={21} /></Slot>
        </ToolInner>
      </ToolRow>

      <Ribbon>
        <RibbonButton $w={62}>
          <Ico n="exit" />
          <RibbonLabel>Exit ...</RibbonLabel>
          <RibbonCaret><Caret /></RibbonCaret>
        </RibbonButton>
        <RibbonButton $w={102}>
          <Ico n="smart" />
          <RibbonLabel>Smart Dimension</RibbonLabel>
          <RibbonCaret><Caret /></RibbonCaret>
        </RibbonButton>
        <RibbonGap $w={9} />
        <RibbonSep />
        <SketchGrid>
          <SketchCell><Ico n="line" s={20} /><Caret /></SketchCell>
          <SketchCell><Ico n="circleS" s={20} /><Caret /></SketchCell>
          <SketchCell><Ico n="spline" s={20} /><Caret /></SketchCell>
          <SketchCell><Ico n="dashBox" s={20} /></SketchCell>
          <SketchCell><Ico n="rectS" s={20} /><Caret /></SketchCell>
          <SketchCell><Ico n="circleS" s={20} /><Caret /></SketchCell>
          <SketchCell />
          <SketchCell />
          <SketchCell><Ico n="slotS" s={20} /><Caret /></SketchCell>
          <SketchCell><Ico n="polyS" s={20} /><Caret /></SketchCell>
          <SketchCell><Ico n="fillet" s={20} /><Caret /></SketchCell>
          <SketchCell><Ico n="pointS" s={20} /></SketchCell>
        </SketchGrid>
        <RibbonSep />
        <RibbonButton $w={86}>
          <Ico n="trim" />
          <RibbonLabel>Trim Entities</RibbonLabel>
          <RibbonCaret><Caret /></RibbonCaret>
        </RibbonButton>
        <RibbonButton $w={104}>
          <Ico n="convert" />
          <RibbonLabel>Convert Entities</RibbonLabel>
          <RibbonCaret><Caret /></RibbonCaret>
        </RibbonButton>
        <RibbonButton $w={58} $two>
          <Ico n="offset" />
          <RibbonLabel>Offset<br />Entities</RibbonLabel>
        </RibbonButton>
        <RibbonButton $w={66} $two>
          <Ico n="offsetS" />
          <RibbonLabel>Offset On<br />Surface</RibbonLabel>
        </RibbonButton>
        <StackColumn>
          <StackRow><Ico n="mirror" s={20} />Mirror Entities</StackRow>
          <StackRow><Ico n="pattern" s={20} />Linear Sketch Pattern<Caret /></StackRow>
          <StackRow><Ico n="move" s={20} />Move Entities<Caret /></StackRow>
        </StackColumn>
        <RibbonSep />
        <RibbonButton $w={160}>
          <Ico n="relations" />
          <RibbonLabel>Display/Delete Relations</RibbonLabel>
          <RibbonCaret><Caret /></RibbonCaret>
        </RibbonButton>
        <RibbonButton $w={47} $two>
          <Ico n="repair" />
          <RibbonLabel>Repair<br />Sketch</RibbonLabel>
        </RibbonButton>
        <RibbonGap $w={2} />
        <RibbonSep />
        <RibbonButton $w={47}>
          <Ico n="quick" />
          <RibbonLabel>Qui...</RibbonLabel>
          <RibbonCaret><Caret /></RibbonCaret>
        </RibbonButton>
        <RibbonGap $w={2} />
        <RibbonSep />
        <RibbonButton $w={48} $two>
          <Ico n="rapid" />
          <RibbonLabel $on>Rapid<br />Sketch</RibbonLabel>
        </RibbonButton>
        <RibbonButton $w={74} $two>
          <Ico n="instant" />
          <RibbonLabel $on>Instant2D</RibbonLabel>
        </RibbonButton>
        <RibbonButton $w={96} $two>
          <Ico n="shaded" />
          <RibbonLabel $on>Shaded Sketch<br />Contours</RibbonLabel>
        </RibbonButton>
      </Ribbon>

      <TabRow>
        <Tab $w={75}>Features</Tab>
        <Tab $w={61} $on>Sketch</Tab>
        <Tab $w={74}>Evaluate</Tab>
        <Tab $w={136}>MBD Dimensions</Tab>
        <Tab $w={173}>SOLIDWORKS Add-Ins</Tab>
        <Tab $w={56}>MBD</Tab>
        <Tab $w={157}>SOLIDWORKS CAM</Tab>
        <HeadsUp>
          <Slot $w={26}><Ico n="zoomFit" s={21} /></Slot>
          <Slot $w={26}><Ico n="zoomArea" s={21} /></Slot>
          <Slot $w={26}><Ico n="prevView" s={21} /></Slot>
          <Slot $w={26}><Ico n="sectionV" s={21} /></Slot>
          <Slot $w={26}><Ico n="rapidA" s={21} /></Slot>
          <Slot $w={26}><Ico n="cube" s={20} /></Slot>
          <Slot $w={14}><Caret /></Slot>
          <Slot $w={26}><Ico n="display" s={21} /></Slot>
          <Slot $w={14}><Caret /></Slot>
          <Slot $w={26}><Ico n="eye" s={20} /></Slot>
          <Slot $w={14}><Caret /></Slot>
          <Slot $w={26}><Ico n="appear" s={22} /></Slot>
          <Slot $w={26}><Ico n="scene" s={22} /></Slot>
          <Slot $w={14}><Caret /></Slot>
          <Slot $w={26}><Ico n="screen" s={21} /></Slot>
          <Slot $w={14}><Caret /></Slot>
        </HeadsUp>
        <DocControls>
          <Slot $w={26}><Ico n="paneL" s={16} /></Slot>
          <Slot $w={26}><Ico n="paneR" s={16} /></Slot>
          <Slot $w={26}><Ico n="winMinDoc" s={16} /></Slot>
          <Slot $w={26}><Ico n="winMaxDoc" s={16} /></Slot>
          <Slot $w={26}><Ico n="winCloseDoc" s={16} /></Slot>
        </DocControls>
      </TabRow>

      <Work>
        <Dock>
          <DockColumn $w={52} $h={531}>
            <DockGrip $h={11} />
            <DockList items={col1} />
          </DockColumn>
          <DockColumn $w={52} $h={581} $line>
            <DockGrip $h={13} />
            <DockList items={col2} />
          </DockColumn>
        </Dock>
        <Center>
          <CenterTop>
            <Pane>
              <PaneGrip />
              <PaneTabs>
                <PaneTab><Ico n="partYellow" /></PaneTab>
                <PaneTab $on><Ico n="list" /></PaneTab>
                <PaneTab><Ico n="tree" /></PaneTab>
                <PaneTab><Ico n="target" /></PaneTab>
                <PaneTab><Ico n="taskBall" /></PaneTab>
                <PaneArrows>
                  <PaneArrow>◀</PaneArrow>
                  <PaneArrow>▶</PaneArrow>
                </PaneArrows>
              </PaneTabs>
              <PaneHead>
                <Ico n="dimTitle" s={19} />
                <PaneTitle>Dimension</PaneTitle>
                <PaneHelp><Ico n="whatsNew" s={18} /></PaneHelp>
                <PaneHelp><Ico n="helpC" s={15} /></PaneHelp>
              </PaneHead>
              <CheckRow><Ico n="check" s={17} /></CheckRow>
              <SubTabs>
                <SubTab $w={50} $on>Value</SubTab>
                <SubTab $w={63}>Leaders</SubTab>
                <SubTab $w={49}>Other</SubTab>
              </SubTabs>
              <PaneBody>
                <PaneForm>
                  <Group $pb={10}>
                    <GroupTitle>Style<Chevron /></GroupTitle>
                    <StyleIcons>
                      <Slot $w={24}><Ico n="styleA" s={20} /></Slot>
                      <Slot $w={29}><Ico n="starPlus" s={20} /></Slot>
                      <Slot $w={29}><Ico n="starX" s={20} /></Slot>
                      <Slot $w={29}><Ico n="starSave" s={20} /></Slot>
                      <Slot $w={29}><Ico n="starDown" s={20} /></Slot>
                    </StyleIcons>
                    <FieldRow $mt={0}><Dropdown>&lt;NONE&gt;</Dropdown></FieldRow>
                  </Group>
                  <Group $pb={12}>
                    <GroupTitle>Tolerance/Precision<Chevron /></GroupTitle>
                    <FieldRow $mt={8} $pl={1}><FieldIcon><Ico n="tol" /></FieldIcon><Dropdown>None</Dropdown></FieldRow>
                    <FieldRow $mt={13} $pl={1}><FieldIcon><Ico n="prec" /></FieldIcon><Dropdown>.12 (Document)</Dropdown></FieldRow>
                  </Group>
                  <Group $pb={10}>
                    <GroupTitle>Primary Value<Chevron /></GroupTitle>
                    <FieldRow $mt={5}><ReadOnly $w={144} $h={26}>D1@Sketch1</ReadOnly></FieldRow>
                    <FieldRow $mt={8}><ReadOnly $w={120} $h={30}>91.11700222mm</ReadOnly><Spin /></FieldRow>
                  </Group>
                  <Group $pb={0} $last>
                    <GroupTitle>Dimension Text<Chevron /></GroupTitle>
                    <TextRow $mt={5}>
                      <TextIcons $gap={13}><Ico n="xxParen" /><Ico n="xxBox" /></TextIcons>
                      <TextBox>&lt;MOD-DIAM&gt; &lt;DIM&gt;</TextBox>
                    </TextRow>
                    <TextRow $mt={10}>
                      <TextIcons $gap={4}><Ico n="xxParen" /><Ico n="xxBox" /></TextIcons>
                      <TextBox />
                    </TextRow>
                    <IconLine $mt={11} $h={24}>
                      <IconCell><Ico n="arrowX" /></IconCell>
                      <IconCell><Ico n="arrowAngle" s={20} /></IconCell>
                    </IconLine>
                    <IconLine $mt={9} $h={30}>
                      <IconCell><Ico n="alignL" /></IconCell>
                      <IconCell $on><Ico n="alignC" /></IconCell>
                      <IconCell><Ico n="alignR" /></IconCell>
                    </IconLine>
                    <IconLine $mt={5}>
                      <IconCell><Ico n="diam" /></IconCell>
                      <IconCell><Ico n="deg" /></IconCell>
                      <IconCell><Ico n="plusMinus" /></IconCell>
                      <IconCell><Ico n="cl" /></IconCell>
                    </IconLine>
                    <IconLine $mt={9}>
                      <IconCell><Ico n="sq" /></IconCell>
                      <IconCell><Ico n="vee" /></IconCell>
                      <IconCell><Ico n="cbore" /></IconCell>
                      <IconCell><Ico n="depth" /></IconCell>
                      <IconCell><Ico n="clPlus" /></IconCell>
                    </IconLine>
                  </Group>
                </PaneForm>
                <Scroll>
                  <ScrollEnd $top />
                  <ScrollThumb />
                  <ScrollFill />
                  <ScrollEnd />
                </Scroll>
              </PaneBody>
            </Pane>

            <Viewport>
              <Canvas width="1585" height="824" viewBox="335 176 1585 824">
                <g stroke="#6cadee" strokeWidth="1.500" fill="none">
                  <path d="M1128 370.500H1330M1128 776H1423M1419 440V752" />
                  <path d="M1413 752l6 24 6-24zM1419 752v24" />
                </g>
                <circle cx="1125.500" cy="573" r="202.500" fill="none" stroke="#111" strokeWidth="2.500" />
                <circle cx="1419" cy="752" r="3" fill="#6cadee" stroke="#111" />
                <rect x="1125" y="367" width="6" height="6" fill="#55a7f5" stroke="#111" />
                <rect x="1125" y="773" width="6" height="6" fill="#55a7f5" stroke="#111" />
                <g stroke="#f00" strokeWidth="1.500" fill="#f00">
                  <path d="M1126 537v36M1126 573h20" fill="none" />
                  <path d="M1122 544l4-10 4 10zM1135 569l11 4-11 4z" />
                </g>
                <path d="M1122 573h8M1126 573v5" stroke="#111" />
                <path d="M1831 182h-20v21c0 3 3 4 5 4h16" fill="none" stroke="#a9b8ca" strokeWidth="2" />
                <path d="M1832 206l9-9v5c5 1 9 0 13-4-1 8-7 12-13 11v5z" fill="#a9b8ca" stroke="#9db0c5" />
                <path d="M1859 217l16 16M1875 217l-16 16" stroke="#cf9aa6" strokeWidth="6" />
                <g>
                  <rect x="387" y="930" width="34" height="5" fill="#d62828" stroke="#7a1414" />
                  <path d="M411 925l13 7.500-13 7.500z" fill="#b81d1d" stroke="#7a1414" />
                  <text x="423" y="938" fontSize="12" fill="#e01a1a" fontFamily="Liberation Sans, sans-serif">X</text>
                  <rect x="383" y="936" width="5" height="24" fill="#3a3ad8" stroke="#16167a" />
                  <path d="M380 958l5.500 13 5.500-13z" fill="#1a1ac0" stroke="#16167a" />
                  <text x="381" y="981" fontSize="12" fill="#1a1af0" fontFamily="Liberation Sans, sans-serif">Z</text>
                  <circle cx="385" cy="932" r="5.500" fill="#0d5e20" stroke="#0a3d15" />
                </g>
              </Canvas>
              <SashHandle />
              <TreeRow>
                <TreeArrow />
                <Ico n="partTree" s={20} />
                <TreeLabel>Part1  (Default&lt;&lt;...</TreeLabel>
              </TreeRow>
              <TaskPane>
                <TaskItem $on><Ico n="taskHome" s={20} /></TaskItem>
                <TaskItem><Ico n="taskBooks" s={20} /></TaskItem>
                <TaskItem><Ico n="taskFolder" s={20} /></TaskItem>
                <TaskItem><Ico n="taskLayout" s={20} /></TaskItem>
                <TaskItem><Ico n="taskBall" s={20} /></TaskItem>
                <TaskItem><Ico n="taskList" s={20} /></TaskItem>
                <TaskItem><Ico n="taskChat" s={20} /></TaskItem>
              </TaskPane>
              <ViewLabel>*Top</ViewLabel>
              <ModifyBox>
                <ModifyTitle>Modify</ModifyTitle>
                <ModifyTools>
                  <ModifyTool><Ico n="check2" s={18} /></ModifyTool>
                  <ModifyTool><Ico n="cross2" s={15} /></ModifyTool>
                  <ModifyTool><Ico n="traffic" s={20} /></ModifyTool>
                  <ModifyTool><Ico n="linkUndo" s={20} /></ModifyTool>
                  <ModifyTool $on><Ico n="wand" s={21} /></ModifyTool>
                </ModifyTools>
                <ModifyName>D1@Sketch1</ModifyName>
                <ModifyValue>
                  <Selected>91.11700222mm</Selected>
                  <Stepper>
                    <StepBtn><Caret $up $c="#111" /></StepBtn>
                    <StepBtn><Caret $c="#111" /></StepBtn>
                  </Stepper>
                </ModifyValue>
                <Thumbwheel />
              </ModifyBox>
            </Viewport>
          </CenterTop>
          <BottomTabs>
            <NavGroup>
              <NavBtn $back /><NavBtn $back /><NavBtn /><NavBtn />
            </NavGroup>
            <ModelTab $w={70} $on>Model</ModelTab>
            <ModelTab $w={84}>3D Views</ModelTab>
            <ModelTab $w={134}>Motion Study 1</ModelTab>
          </BottomTabs>
        </Center>
      </Work>

      <StatusBar>
        <StatusText $w={1458} $pl={2}>SOLIDWORKS Premium 2019 SP3.0</StatusText>
        <StatusText $w={108} $sep>Fully Defined</StatusText>
        <StatusText $w={123} $pl={4} $sep>Editing Sketch1</StatusText>
        <StatusIcon $w={33} $sep><Ico n="traffic" s={17} /></StatusIcon>
        <StatusText $w={98} $pl={30} $c="#9c9c9c">Custom</StatusText>
        <StatusIcon $w={20}><StatusCaret><Caret $up /></StatusCaret></StatusIcon>
        <StatusIcon $w={64} />
        <StatusIcon $w={22}><Ico n="diskMini" s={18} /></StatusIcon>
      </StatusBar>

      <RedBox $x={56} $y={67} $w={126} $h={77} />
      <RedBox $x={1070} $y={327} $w={114} $h={94} />
      <RedBox $x={1372} $y={473} $w={117} $h={107} />
      <RedBox $x={1438} $y={994} $w={121} $h={60} />
      <Note $x={207} $y={79} $w={260} $size={33} $lh={46}>1.选择智能尺寸</Note>
      <Note $x={1092} $y={271} $w={240} $size={32.500} $lh={46}>2.点圆的边沿</Note>
      <Note $x={1520} $y={486} $w={325} $size={33} $lh={57.500}>3、随便点一处放置尺寸。之后输入约束尺寸</Note>
      <Note $x={1399} $y={916} $w={420} $size={20} $lh={35.500} $weight={400}>*注意此时圆形边沿已经为黑色，下方显示也由刚才的“欠定义”转为“全定义”。</Note>
    </Window>
  );
}
